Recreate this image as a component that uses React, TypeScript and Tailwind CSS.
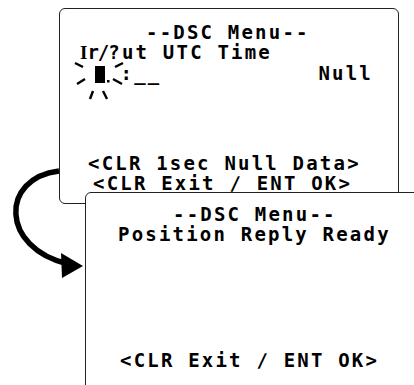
import React from 'react';

const lcd = "font-['DejaVu_Sans_Mono',monospace] font-bold text-[19px] leading-[20px] tracking-[2.2px] text-black whitespace-pre";

function Cursor() {
  return (
    <svg width="47" height="20" viewBox="0 0 47 20" className="overflow-visible shrink-0" fill="none">
      <rect x="21" y="3" width="10" height="17" fill="#000" />
      <rect x="33" y="17" width="2.5" height="2.5" fill="#000" />
      <g stroke="#000" strokeWidth="2.4" strokeLinecap="butt">
        <line x1="1" y1="0" x2="9" y2="4" />
        <line x1="3" y1="21" x2="11" y2="16" />
        <line x1="19" y1="28" x2="16" y2="36" />
        <line x1="29" y1="28" x2="33" y2="36" />
        <line x1="41" y1="4" x2="49" y2="0" />
        <line x1="39" y1="16" x2="48" y2="21" />
      </g>
    </svg>
  );
}

function Arrow() {
  return (
    <svg className="absolute left-0 top-0" width="414" height="385" viewBox="0 0 414 385" fill="none">
      <path d="M59 171 C0 178, 0 248, 68 264" stroke="#000" strokeWidth="5.5" />
      <polygon points="61,253 83,266 62,278" fill="#000" />
    </svg>
  );
}

export default function App() {
  return (
    <div className="relative w-[414px] h-[385px] overflow-hidden bg-white">
      <div className="ml-[59px] mt-[8px] w-[340px] rounded-[6px] border-[1.5px] border-[#222] pt-[12.5px] pb-[10px] pr-[25px]">
        <div className={`${lcd} ml-[86px]`}>--DSC Menu--</div>
        <div className={`${lcd} ml-[20px]`}>
          <span className="font-['Liberation_Serif',serif] tracking-normal">I</span>
          <span className="tracking-[-1px]">r/</span>
          <span>?ut UTC Time</span>
        </div>
        <div className="flex items-start ml-[13.5px]">
          <Cursor />
          <span className={lcd}>:__</span>
          <span className={`${lcd} ml-auto`}>Null</span>
        </div>
        <div className={`${lcd} ml-[28px] mt-[70px]`}>{'<CLR 1sec Null Data>'}</div>
        <div className={`${lcd} ml-[33px]`}>{'<CLR Exit ∕ ENT OK>'}</div>
      </div>
      <div className="absolute left-[85px] top-[192px] w-[360px] h-[220px] rounded-[6px] border-[1.5px] border-[#222] bg-white pt-[11px]">
        <div className={`${lcd} ml-[87px]`}>--DSC Menu--</div>
        <div className={`${lcd} ml-[32px]`}>Position Reply Ready</div>
        <div className={`${lcd} ml-[34px] mt-[106px]`}>{'<CLR Exit ∕ ENT OK>'}</div>
      </div>
      <Arrow />
    </div>
  );
}
